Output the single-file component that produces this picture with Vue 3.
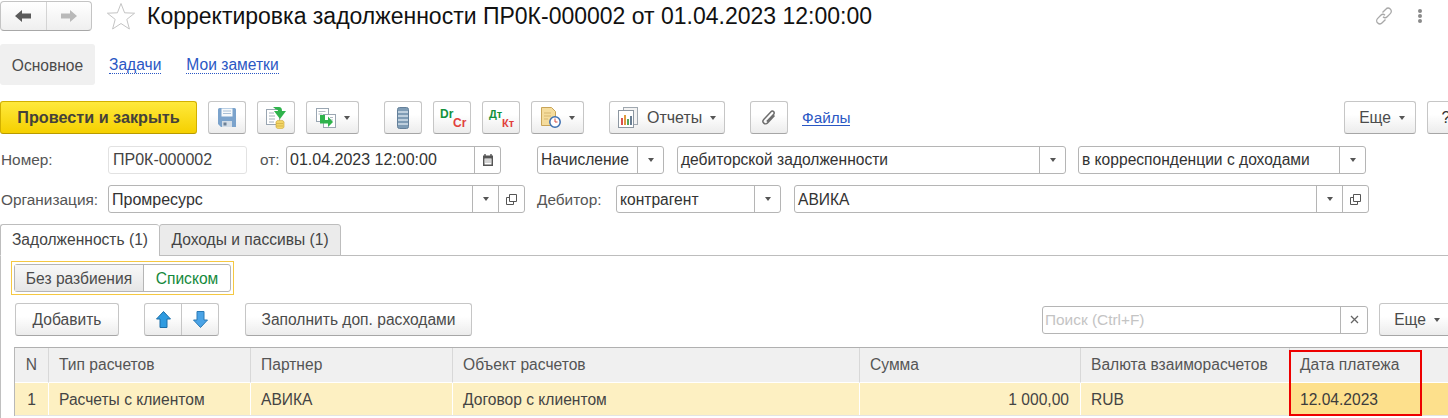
<script setup>
const columns = [
  { title: 'N', width: 34, cls: 'center' },
  { title: 'Тип расчетов', width: 202 },
  { title: 'Партнер', width: 202 },
  { title: 'Объект расчетов', width: 407 },
  { title: 'Сумма', width: 221 },
  { title: 'Валюта взаиморасчетов', width: 209 },
  { title: 'Дата платежа', width: 159 }
]
const cells = [
  { text: '1', cls: 'center' },
  { text: 'Расчеты с клиентом' },
  { text: 'АВИКА' },
  { text: 'Договор с клиентом' },
  { text: '1 000,00', cls: 'right' },
  { text: 'RUB' },
  { text: '12.04.2023', cls: 'hot' }
]
</script>

<template>
  <div class="page">
    <header class="head">
      <div class="nav">
        <button class="seg">
          <svg width="16" height="12" viewBox="0 0 16 12"><path d="M0 6 7 0v3.600h9v4.800H7V12z" fill="#5a5a5a"/></svg>
        </button>
        <button class="seg">
          <svg width="16" height="12" viewBox="0 0 16 12"><path d="M16 6 9 0v3.600H0v4.800h9V12z" fill="#b9b9b9"/></svg>
        </button>
      </div>
      <svg class="star" width="30" height="28" viewBox="0 0 30 28"><path d="M15 1.500 18.600 10.800 28.600 11.200 20.800 17.400 23.400 27 15 21.500 6.600 27 9.200 17.400 1.400 11.200 11.400 10.800z" fill="#fff" stroke="#c4c4c4"/></svg>
      <h1 class="title">Корректировка задолженности ПР0К-000002 от 01.04.2023 12:00:00</h1>
      <svg class="link" width="20" height="20" viewBox="0 0 20 20" fill="none" stroke="#a8a8a8" stroke-width="1.300"><path d="M8.500 6.500 11.800 3.200a3 3 0 0 1 4.700 4.200L13.200 10.700a3 3 0 0 1-4.200 0"/><path d="M11.500 13.500 8.200 16.800a3 3 0 0 1-4.700-4.200L6.800 9.300a3 3 0 0 1 4.200 0"/></svg>
      <svg class="dots" width="4" height="14" viewBox="0 0 4 14" fill="#8a8a8a"><circle cx="2" cy="2" r="2"/><circle cx="2" cy="7" r="2"/><circle cx="2" cy="12" r="2"/></svg>
    </header>

    <nav class="pages">
      <span class="page-active">Основное</span>
      <a class="page-link first">Задачи</a>
      <a class="page-link second">Мои заметки</a>
    </nav>

    <div class="toolbar">
      <button class="btn primary">Провести и закрыть</button>
      <button class="btn icon m11">
        <svg width="18" height="19" viewBox="0 0 18 19"><path d="M0 1.500A1.500 1.500 0 0 1 1.500 0h15A1.500 1.500 0 0 1 18 1.500V19H3L0 16z" fill="#7ba3cc"/><rect x="3.500" y="0.500" width="11" height="8" fill="#f6f9fb"/><path d="M5 3h8M5 5.500h8" stroke="#a9c0d6"/><rect x="4" y="13" width="10" height="6" fill="#d3dde7"/><rect x="5.500" y="14.500" width="3" height="3" fill="#6c8096"/></svg>
      </button>
      <button class="btn icon m11">
        <svg width="20" height="22" viewBox="0 0 20 22"><rect x="0.500" y="2.500" width="13" height="15" fill="#fff" stroke="#9aa6b2"/><path d="M3 6h5M3 9h6M3 12h6M3 15h5" stroke="#a3afba"/><ellipse cx="14" cy="15" rx="4" ry="1.800" fill="#f3d667" stroke="#c9a53a" stroke-width=".6"/><path d="M10 15v5c0 1 1.800 1.800 4 1.800s4-.8 4-1.800v-5" fill="#f3d667" stroke="#c9a53a" stroke-width=".6"/><path d="M10 16.500h7M10 19h7" stroke="#c9a53a" stroke-width=".6"/><path d="M7 0h6c2 0 3 1.500 3 4h4l-6 8-6-8h4c0-1-.6-1.500-2-1.500z" fill="#2fb34c"/></svg>
      </button>
      <button class="btn icon-drop m11">
        <svg width="20" height="20" viewBox="0 0 20 20"><rect x="0.500" y="0.500" width="12" height="13" fill="#fff" stroke="#9aa6b2"/><rect x="7.500" y="6.500" width="12" height="13" fill="#fff" stroke="#9aa6b2"/><path d="M2.500 3.500h7M2.500 6h4M14 9.500h3M14 12h3" stroke="#b3bcc5"/><path d="M4 7h5v5h3V8.500l5 5.500-5 5v-3.500H4z" fill="#2fb34c"/></svg>
        <i class="caret"></i>
      </button>
      <button class="btn icon m25">
        <svg width="12" height="22" viewBox="0 0 12 22"><rect x="0.500" y="0.500" width="11" height="21" rx="2" fill="#7f9cb5" stroke="#64809a"/><path d="M1 5h10M1 9h10M1 13h10M1 17h10" stroke="#d3e0ea" stroke-width="1.300"/></svg>
      </button>
      <button class="btn icon m11 code">
        <span class="dr green">Dr</span><span class="cr red">Cr</span>
      </button>
      <button class="btn icon m11 code">
        <span class="dr green small">Дт</span><span class="cr red small">Кт</span>
      </button>
      <button class="btn icon-drop m11">
        <svg width="20" height="21" viewBox="0 0 20 21"><path d="M0.500 0.500h10l4 4v14h-14z" fill="#f5dc9c" stroke="#c8a458"/><path d="M3 6h7M3 9h7M3 12h4" stroke="#d7b771"/><circle cx="14" cy="15" r="5.200" fill="#fff" stroke="#3d6fb0" stroke-width="1.500"/><path d="M14 11.500V15h2.500" stroke="#d84a3c" fill="none"/></svg>
        <i class="caret"></i>
      </button>
      <button class="btn reports m25">
        <svg width="20" height="21" viewBox="0 0 20 21"><rect x="5.500" y="0.500" width="14" height="17" fill="#f3f3f3" stroke="#a0a8b0"/><rect x="0.500" y="3.500" width="15" height="17" fill="#fff" stroke="#8d97a1"/><rect x="3" y="11" width="2" height="7" fill="#d9534f"/><rect x="6" y="8" width="2" height="10" fill="#e09a3e"/><rect x="9" y="12" width="2" height="6" fill="#57a85a"/><rect x="12" y="9" width="2" height="9" fill="#6a7f94"/></svg>
        <span>Отчеты</span>
        <i class="caret"></i>
      </button>
      <button class="btn icon m25">
        <svg width="16" height="18" viewBox="0 0 16 18" fill="none" stroke="#6e6e6e" stroke-width="1.500"><path d="M13.500 6.500 6.500 14a2.600 2.600 0 0 1-3.800-3.600L10 2.700a1.800 1.800 0 0 1 2.700 2.500L5.800 12.500"/></svg>
      </button>
      <a class="files">Файлы</a>
      <button class="btn more-top">Еще <i class="caret"></i></button>
      <button class="btn help">?</button>
    </div>

    <div class="fields one">
      <label class="lbl w108">Номер:</label>
      <div class="field readonly w139"><span class="val num">ПР0К-000002</span></div>
      <label class="lbl from">от:</label>
      <div class="field w215">
        <span class="val num">01.04.2023 12:00:00</span>
        <span class="cell-btn">
          <svg width="12" height="12" viewBox="0 0 12 12"><path d="M1 1.500h10V12H1z" fill="#555"/><path d="M3 0v3M9 0v3" stroke="#555" stroke-width="1.400"/><path d="M2.500 4.500h7v6h-7z" fill="#fff"/><path d="M3.500 5.500h1v1h-1zM5.500 5.500h1v1h-1zM7.500 5.500h1v1h-1zM3.500 7.500h1v1h-1zM5.500 7.500h1v1h-1zM7.500 7.500h1v1h-1z" fill="#555"/></svg>
        </span>
      </div>
      <div class="field w127 ml36"><span class="val">Начисление</span><span class="cell-btn"><i class="caret"></i></span></div>
      <div class="field w389 ml13"><span class="val">дебиторской задолженности</span><span class="cell-btn"><i class="caret"></i></span></div>
      <div class="field w288 ml12"><span class="val">в корреспонденции с доходами</span><span class="cell-btn"><i class="caret"></i></span></div>
    </div>

    <div class="fields two">
      <label class="lbl w108">Организация:</label>
      <div class="field w417">
        <span class="val num">Промресурс</span>
        <span class="cell-btn"><i class="caret"></i></span>
        <span class="cell-btn open"><svg width="11" height="11" viewBox="0 0 11 11" fill="none" stroke="#555"><path d="M3.500.5h7v7h-7z"/><path d="M3.500 3.500h-3v7h7v-3"/></svg></span>
      </div>
      <label class="lbl debtor">Дебитор:</label>
      <div class="field w165"><span class="val">контрагент</span><span class="cell-btn"><i class="caret"></i></span></div>
      <div class="field w575 ml13">
        <span class="val">АВИКА</span>
        <span class="cell-btn"><i class="caret"></i></span>
        <span class="cell-btn open"><svg width="11" height="11" viewBox="0 0 11 11" fill="none" stroke="#555"><path d="M3.500.5h7v7h-7z"/><path d="M3.500 3.500h-3v7h7v-3"/></svg></span>
      </div>
    </div>

    <div class="tabstrip">
      <span class="tab active">Задолженность (1)</span>
      <span class="tab">Доходы и пассивы (1)</span>
    </div>

    <section class="panel">
      <div class="switch-frame">
        <div class="switch">
          <span class="sw off">Без разбиения</span>
          <span class="sw on">Списком</span>
        </div>
      </div>

      <div class="table-tools">
        <button class="btn add">Добавить</button>
        <div class="updown">
          <button class="arrow">
            <svg width="15" height="17" viewBox="0 0 15 17"><path d="M7.500 .5 14.500 8H11v8.500H4V8H.5z" fill="#2f9be0" stroke="#1c6fa8"/></svg>
          </button>
          <button class="arrow">
            <svg width="15" height="17" viewBox="0 0 15 17"><path d="M7.500 16.500 14.500 9H11V.5H4V9H.5z" fill="#4aa3e6" stroke="#2a7ab5"/></svg>
          </button>
        </div>
        <button class="btn fill">Заполнить доп. расходами</button>
        <div class="search">
          <span class="placeholder">Поиск (Ctrl+F)</span>
          <span class="clear">
            <svg width="9" height="9" viewBox="0 0 9 9" stroke="#666" stroke-width="1.300"><path d="M1 1l7 7M8 1 1 8"/></svg>
          </span>
        </div>
        <button class="btn more-table">Еще <i class="caret"></i></button>
      </div>

      <div class="table">
        <div class="tr th">
          <div v-for="c in columns" :key="c.title" class="td" :class="c.cls" :style="{ width: c.width + 'px' }">{{ c.title }}</div>
        </div>
        <div class="tr body">
          <div v-for="(c, i) in cells" :key="i" class="td" :class="c.cls" :style="{ width: columns[i].width + 'px' }">{{ c.text }}</div>
        </div>
        <div class="mark"></div>
      </div>
    </section>
  </div>
</template>

<style>
html, body { margin: 0; background: #fff; }
</style>

<style scoped>
.page {
  position: relative;
  width: 1448px;
  height: 418px;
  overflow: hidden;
  background: #fff;
  font-family: "Liberation Sans", Arial, sans-serif;
  font-size: 15.6px;
  color: #4b4b4b;
}
button { font: inherit; color: inherit; padding: 0; margin: 0; cursor: default; }
svg { display: block; flex: none; }

.head { display: flex; align-items: center; height: 31px; margin-top: 0; padding-top: 1px; box-sizing: border-box; }
.nav { display: flex; width: 92px; height: 30px; box-sizing: border-box; border: 1px solid #c4c4c4; border-bottom-color: #a8a8a8; border-radius: 4px; background: linear-gradient(#fff, #efefef); overflow: hidden; flex: none; }
.seg { flex: 1; display: flex; align-items: center; justify-content: center; border: 0; background: none; }
.seg + .seg { border-left: 1px solid #d4d4d4; }
.star { margin-left: 14px; }
.title { margin: 0 0 0 11px; font-size: 23px; font-weight: 400; color: #111; white-space: nowrap; line-height: 28px; }
.link { margin-left: auto; }
.dots { margin: 0 26px 0 24px; }

.pages { display: flex; align-items: center; height: 41px; margin-top: 13px; }
.page-active { width: 95px; height: 41px; line-height: 43px; text-align: center; background: #f0f0f0; border-radius: 3px; }
.page-link { color: #2a57c4; border-bottom: 1px dotted #2a57c4; line-height: 16px; margin-top: 2px; }
.page-link.first { margin-left: 14px; }
.page-link.second { margin-left: 25px; }

.toolbar { display: flex; align-items: center; height: 33px; margin-top: 16px; }
.btn { flex: none; height: 33px; box-sizing: border-box; display: flex; align-items: center; justify-content: center; border: 1px solid #c6c6c6; border-bottom-color: #a6a6a6; border-radius: 3px; background: linear-gradient(#fff 40%, #ececec); }
.primary { width: 197px; background: linear-gradient(#ffe93c, #f5d000); border-color: #d2b000; border-bottom-color: #b89a00; font-weight: 700; font-size: 16.200px; color: #44413a; }
.icon { width: 38px; }
.icon-drop { width: 53px; justify-content: flex-start; padding-left: 9px; gap: 8px; }
.m11 { margin-left: 11px; }
.m25 { margin-left: 25px; }
.caret { display: inline-block; width: 0; height: 0; border: 3.500px solid transparent; border-top: 4px solid #555; border-bottom: 0; flex: none; }
.code { position: relative; font-weight: 700; font-size: 12px; }
.dr { position: absolute; left: 6px; top: 8px; line-height: 9px; }
.cr { position: absolute; left: 19px; top: 17px; line-height: 9px; }
.small { font-size: 11px; }
.green { color: #12913c; }
.red { color: #e1403c; }
.reports { width: 116px; justify-content: flex-start; padding-left: 8px; }
.reports span { margin-left: 9px; font-size: 16px; }
.reports .caret { margin-left: 8px; }
.files { margin-left: 14px; width: 48px; white-space: nowrap; font-size: 15.300px; color: #2a57c4; border-bottom: 1px solid #2a57c4; line-height: 15px; }
.more-top { width: 72px; margin-left: 494px; gap: 8px; padding-left: 4px; }
.help { width: 38px; margin-left: 11px; font-size: 16px; color: #333; }

.fields { display: flex; align-items: center; height: 28px; }
.one { margin-top: 12px; }
.two { margin-top: 11px; }
.lbl { flex: none; padding-left: 1px; box-sizing: border-box; color: #555; font-size: 15.4px; }
.two .lbl { padding-top: 2px; }
.w108 { width: 108px; }
.from { width: 39px; padding-left: 13px; }
.debtor { width: 91px; padding-left: 12px; }
.field { flex: none; display: flex; align-items: stretch; height: 28px; box-sizing: border-box; border: 1px solid #b5b5b5; border-radius: 3px; background: #fff; line-height: 26px; }
.two .field { line-height: 28px; }
.readonly { border-color: #e2e2e2; }
.val { flex: 1; padding-left: 3px; color: #333; white-space: nowrap; overflow: hidden; }
.num { font-size: 16px; }
.readonly .val { padding-left: 4px; color: #444; }
.cell-btn { width: 26px; flex: none; display: flex; align-items: center; justify-content: center; border-left: 1px solid #b5b5b5; box-sizing: border-box; }
.w139 { width: 139px; }
.w215 { width: 215px; }
.w127 { width: 127px; }
.w389 { width: 389px; }
.w288 { width: 288px; }
.w417 { width: 417px; }
.w165 { width: 165px; }
.w575 { width: 575px; }
.ml36 { margin-left: 36px; }
.ml13 { margin-left: 13px; }
.ml12 { margin-left: 12px; }

.tabstrip { display: flex; height: 32px; box-sizing: border-box; margin-top: 11px; border-bottom: 1px solid #bdbdbd; }
.tab { box-sizing: border-box; height: 32px; padding-top: 6px; border: 1px solid #bdbdbd; border-radius: 3px 3px 0 0; background: #ebebeb; width: 182px; text-align: center; white-space: nowrap; color: #444; }
.tab.active { width: 159px; background: #fff; border-right: 0; border-bottom-color: #fff; }

.panel { border-left: 1px solid #c0c0c0; height: 162px; padding-top: 5px; box-sizing: border-box; }
.switch-frame { width: 223px; height: 34px; margin-left: 10px; padding: 2px; box-sizing: border-box; border: 1px solid #f5c842; }
.switch { display: flex; height: 28px; box-sizing: border-box; border: 1px solid #b5b5b5; border-radius: 3px; line-height: 28px; text-align: center; }
.sw.off { width: 128px; height: 26px; background: linear-gradient(#f8f8f8, #e6e6e6); border-right: 1px solid #b5b5b5; }
.sw.on { flex: 1; color: #14893c; }

.table-tools { display: flex; align-items: center; height: 33px; margin-top: 8px; margin-left: 14px; }
.add { width: 104px; }
.updown { flex: none; display: flex; width: 75px; height: 33px; margin-left: 25px; box-sizing: border-box; border: 1px solid #c6c6c6; border-bottom-color: #a6a6a6; border-radius: 3px; background: linear-gradient(#fff 40%, #ececec); }
.arrow { flex: 1; display: flex; align-items: center; justify-content: center; border: 0; background: none; }
.arrow + .arrow { border-left: 1px solid #c6c6c6; }
.fill { width: 227px; margin-left: 26px; }
.search { flex: none; display: flex; width: 326px; height: 28px; margin-left: 570px; box-sizing: border-box; border: 1px solid #b5b5b5; border-radius: 3px; line-height: 26px; font-size: 15.4px; }
.placeholder { flex: 1; padding-left: 2px; color: #c4c4c4; }
.clear { width: 26px; display: flex; align-items: center; justify-content: center; border-left: 1px solid #b5b5b5; }
.more-table { width: 72px; margin-left: 11px; gap: 8px; padding-left: 4px; }

.table { position: relative; margin-top: 11px; margin-left: 13px; border-left: 1px solid #b8b8b8; border-top: 1px solid #b0b0b0; }
.tr { display: flex; }
.td { flex: none; box-sizing: border-box; padding-left: 10px; border-right: 1px solid #fff; white-space: nowrap; }
.th { height: 35px; line-height: 33px; color: #555; }
.th .td { background: #f0f0f0; border-bottom: 1px solid #fff; border-right-color: #d8d8d8; }
.body { height: 32px; line-height: 34px; color: #444; border-bottom: 1px solid #e4e4e4; box-sizing: content-box; }
.body .td { background: #fdf0c2; }
.center { text-align: center; padding-left: 0; }
.right { text-align: right; padding: 0 11px 0 0; }
.body .hot { background: #fde08c; color: #3c3c3c; }
.mark { position: absolute; left: 1274px; top: 2px; width: 133px; height: 66px; box-sizing: border-box; border: 2px solid #ee0000; pointer-events: none; }
</style>
